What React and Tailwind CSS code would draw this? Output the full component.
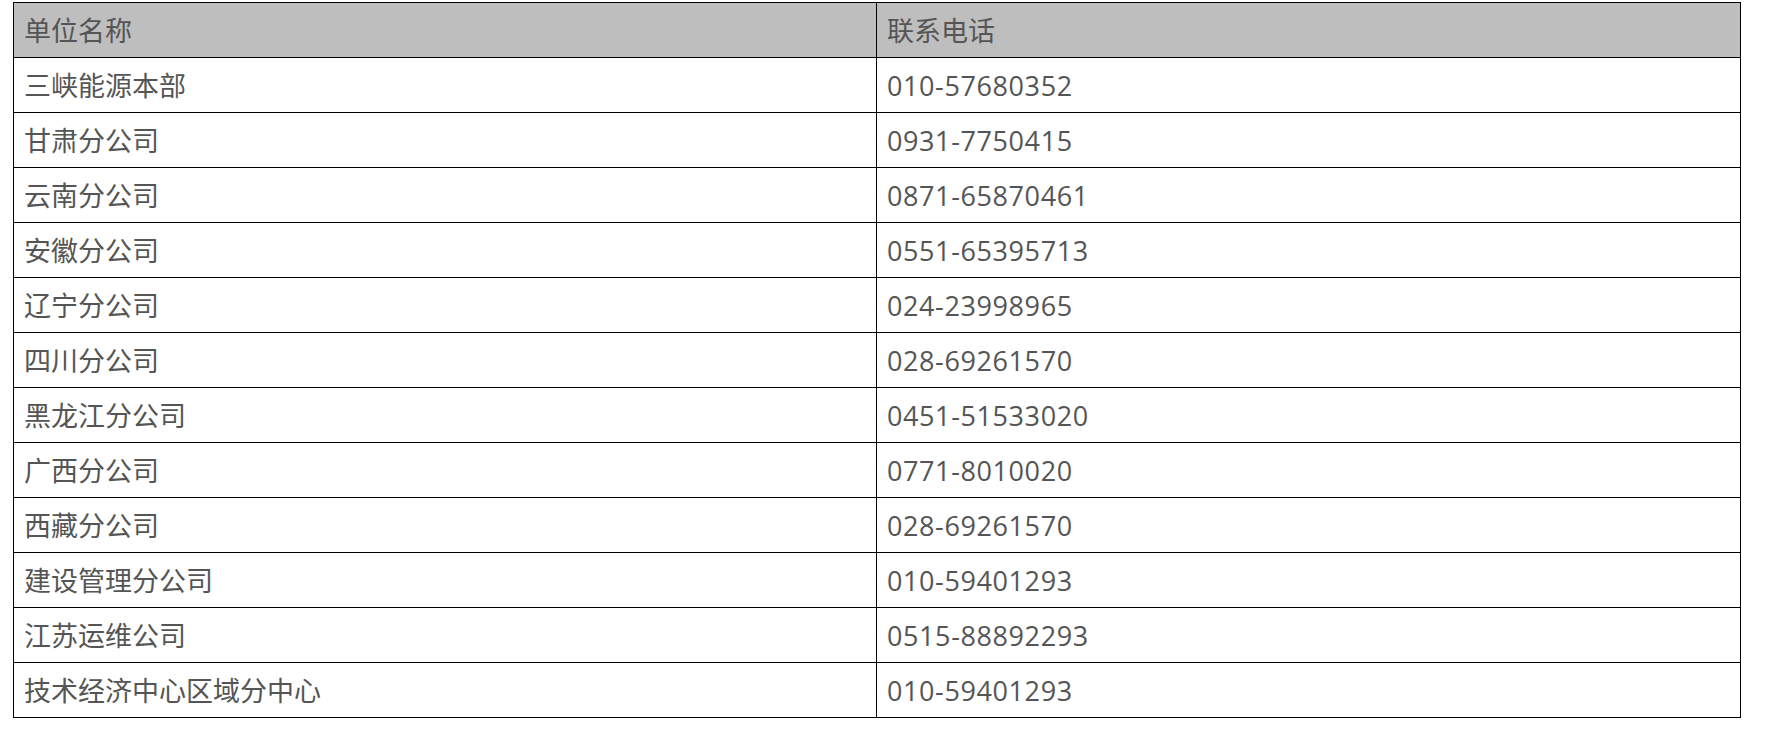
const rows = [
  ["三峡能源本部", "010-57680352"],
  ["甘肃分公司", "0931-7750415"],
  ["云南分公司", "0871-65870461"],
  ["安徽分公司", "0551-65395713"],
  ["辽宁分公司", "024-23998965"],
  ["四川分公司", "028-69261570"],
  ["黑龙江分公司", "0451-51533020"],
  ["广西分公司", "0771-8010020"],
  ["西藏分公司", "028-69261570"],
  ["建设管理分公司", "010-59401293"],
  ["江苏运维公司", "0515-88892293"],
  ["技术经济中心区域分中心", "010-59401293"],
];

export default function App() {
  return (
    <div className="w-[1768px] h-[748px] bg-white pt-[2px] pl-[13px]">
      <table
        className="w-[1728px] border-collapse text-[27px] text-[#555555]"
        style={{ fontFamily: '"Open Sans", "Noto Sans CJK SC", sans-serif' }}
      >
        <thead>
          <tr className="bg-[#bebebe] h-[55px]">
            <th className="w-[863px] border border-black px-[10px] pt-[2px] text-left font-normal">单位名称</th>
            <th className="border border-black px-[10px] pt-[2px] text-left font-normal">联系电话</th>
          </tr>
        </thead>
        <tbody>
          {rows.map(([a, b], i) => (
            <tr key={i} className="h-[55px]">
              <td className="border border-black px-[10px] pt-[2px]">{a}</td>
              <td className="border border-black px-[10px] pt-[2px] tracking-[0.6px]">{b}</td>
            </tr>
          ))}
        </tbody>
      </table>
    </div>
  );
}
